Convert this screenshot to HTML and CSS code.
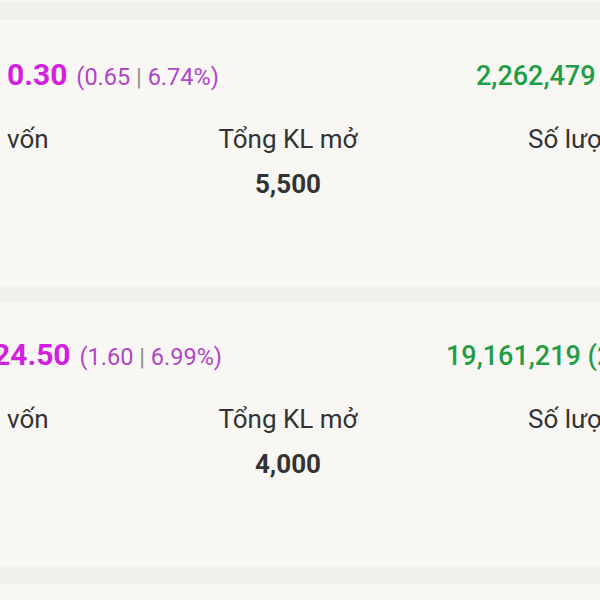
FILE: index.html
```
<!DOCTYPE html>
<html lang="vi">
<head>
	<meta charset="utf-8">
	<title>Chứng quyền</title>
	<meta name="viewport" content="width=device-width, initial-scale=1" />
	<link rel="stylesheet" href="styles.css">
</head>
<body>

	<div class="list">
		<div class="gap gap-top"></div>

		<!-- card 1 -->
		<div class="card">
			<div class="price-row">
				<div class="price">
					<span class="last">0.30</span>
					<span class="change">(0.65 <span class="sep">|</span> 6.74%)</span>
				</div>
				<div class="volume">2,262,479</div>
			</div>
			<div class="info-row">
				<div class="cell cell-left">
					<div class="label">vốn</div>
				</div>
				<div class="cell cell-mid">
					<div class="label">Tổng KL mở</div>
					<div class="value">5,500</div>
				</div>
				<div class="cell cell-right">
					<div class="label">Số lượ</div>
				</div>
			</div>
		</div>

		<div class="gap"></div>

		<!-- card 2 -->
		<div class="card card-second">
			<div class="price-row price-row-wide">
				<div class="price shift">
					<span class="last">24.50</span>
					<span class="change">(1.60 <span class="sep">|</span> 6.99%)</span>
				</div>
				<div class="volume">19,161,219 (2</div>
			</div>
			<div class="info-row">
				<div class="cell cell-left">
					<div class="label">vốn</div>
				</div>
				<div class="cell cell-mid">
					<div class="label">Tổng KL mở</div>
					<div class="value">4,000</div>
				</div>
				<div class="cell cell-right">
					<div class="label">Số lượ</div>
				</div>
			</div>
		</div>

		<div class="gap gap-bottom"></div>
		<div class="card card-stub"></div>
	</div>

</body>
</html>
```

FILE: styles.css
```
body {
	margin: 0;
	padding: 0;
	width: 600px;
	height: 600px;
	overflow: hidden;
	background: #f8f7f4;
	font-family: Roboto, "Noto Sans", "Liberation Sans", sans-serif;
	color: #333333;
}

.list {
	display: flex;
	flex-direction: column;
}

.gap {
	height: 15px;
	background: #f2f0ec;
}
.gap-top {
	height: 18px;
	border-top: 2px solid #f8f7f4;
}
.gap-bottom {
	height: 17px;
}

.card {
	height: 267px;
	padding: 37px 0 0 7px;
	box-sizing: border-box;
	background: #f8f7f4;
}
.card-second {
	height: 265px;
	padding-top: 35px;
	background: #f9f7f4;
}
.card-stub {
	height: 16px;
	padding: 0;
}

/* price + change on the left, matched volume on the right */
.price-row {
	display: grid;
	grid-template-columns: 469px 1fr;
	align-items: baseline;
	height: 36px;
	white-space: nowrap;
}
.price-row-wide {
	grid-template-columns: 439px 1fr;
}
.price {
	display: flex;
	align-items: baseline;
	gap: 9px;
}
.price.shift {
	margin-left: -14px;
}
.last {
	font-size: 30px;
	line-height: 36px;
	font-weight: 700;
	color: #d21fe0;
}
.change {
	font-size: 23.5px;
	color: #b146c6;
}
.sep {
	color: #8d8d8d;
}
.volume {
	font-size: 27px;
	font-weight: 500;
	color: #1f9e45;
}

.info-row {
	display: grid;
	grid-template-columns: 207px 148px 1fr;
	margin-top: 30px;
	white-space: nowrap;
}
.cell-mid {
	display: flex;
	flex-direction: column;
	align-items: center;
	gap: 13px;
}
.cell-right {
	padding-left: 166px;
}
.label {
	font-size: 26px;
	line-height: 32px;
}
.value {
	font-size: 26px;
	line-height: 32px;
	font-weight: 700;
}
```
